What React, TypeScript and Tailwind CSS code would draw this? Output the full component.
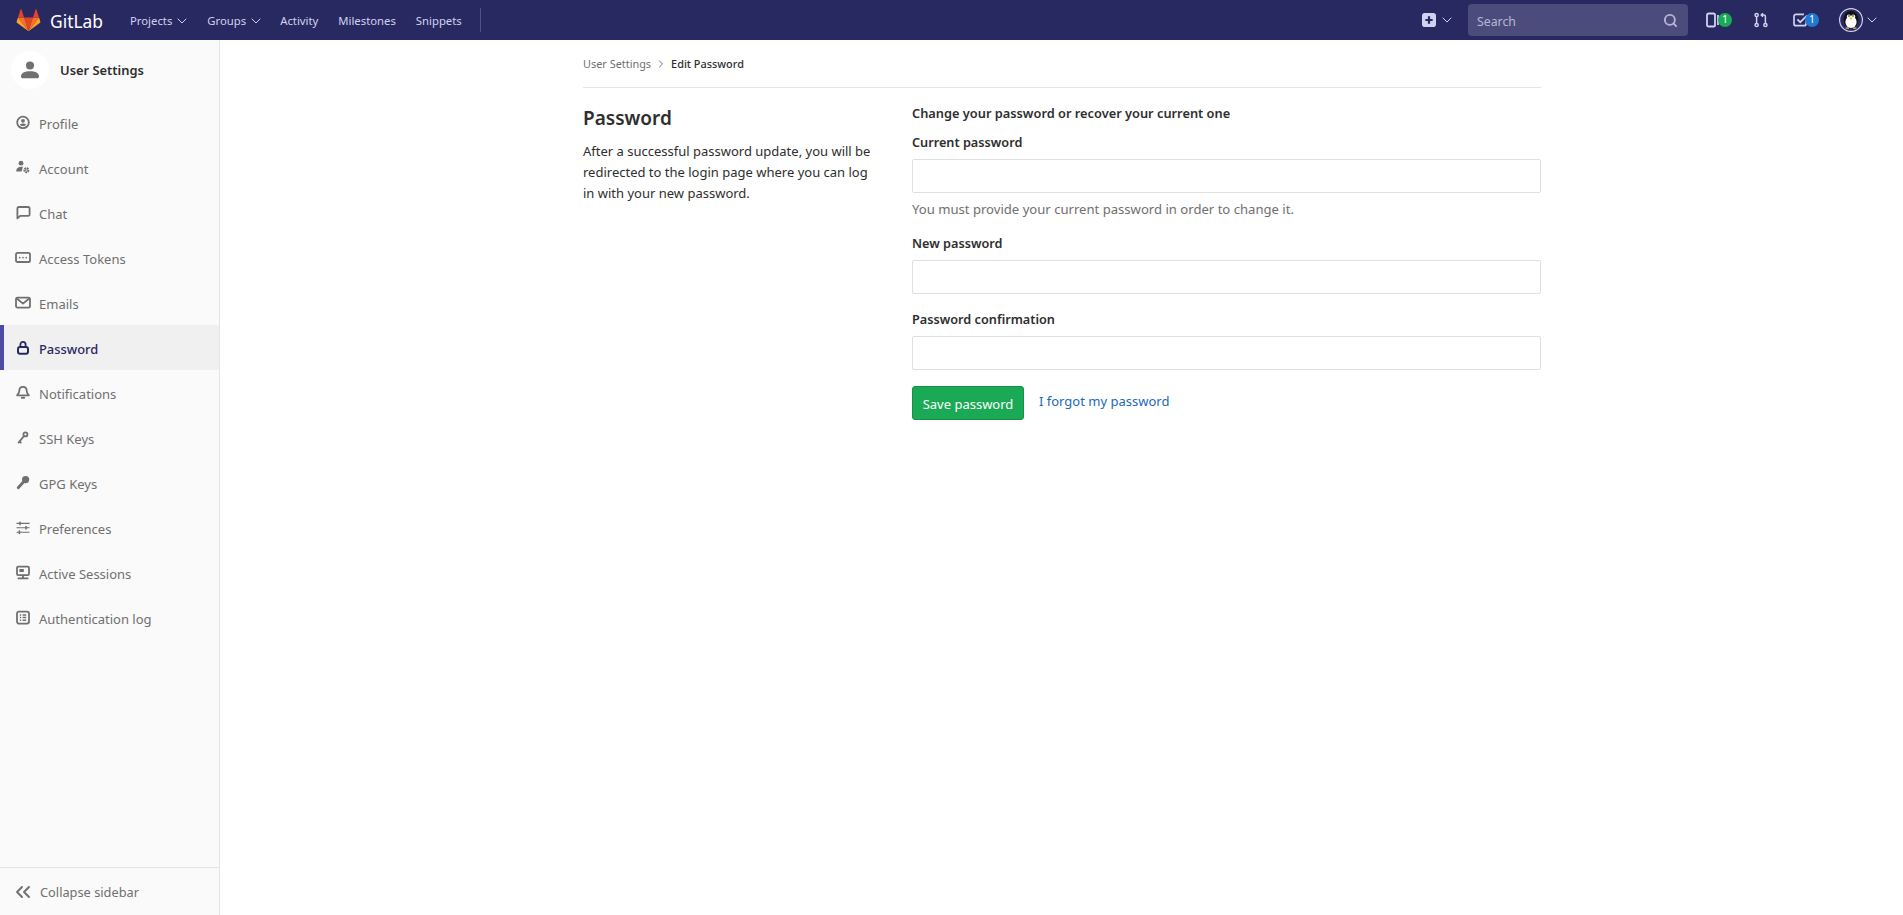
import type { ReactNode } from "react";
import { ChevronDown, ChevronRight, ChevronsLeft, Search } from "lucide-react";

function Ico({ children, size = 16, className = "" }: { children: ReactNode; size?: number; className?: string }) {
  return (
    <svg width={size} height={size} viewBox="0 0 16 16" fill="none" stroke="currentColor" strokeWidth="1.8" strokeLinecap="round" strokeLinejoin="round" className={className}>
      {children}
    </svg>
  );
}

const icons: Record<string, ReactNode> = {
  Profile: (
    <Ico>
      <circle cx="8" cy="7.4" r="5.8" />
      <circle cx="8" cy="5.8" r="1.9" fill="currentColor" stroke="none" />
      <path d="M4.8 9.4c1.8-1.1 4.6-1.1 6.4 0c-.8 1.2-1.9 1.7-3.2 1.7s-2.4-.5-3.2-1.7z" fill="currentColor" stroke="none" />
    </Ico>
  ),
  Account: (
    <Ico>
      <circle cx="6" cy="3.2" r="2.4" fill="currentColor" stroke="none" />
      <path d="M1.2 11.4c0-3 2-4.6 5-4.6c.7 0 1.2.1 1.7.3l-1.3 4.3z" fill="currentColor" stroke="none" />
      <circle cx="11.4" cy="10.2" r="1.8" strokeWidth="2.4" strokeDasharray="1.5 .5" strokeLinecap="butt" />
    </Ico>
  ),
  Chat: (
    <Ico>
      <path d="M2.4 13.4V3.4a1.4 1.4 0 0 1 1.4-1.4h9.4a1.4 1.4 0 0 1 1.4 1.4v6a1.4 1.4 0 0 1-1.4 1.4H5.2z" />
    </Ico>
  ),
  "Access Tokens": (
    <Ico>
      <rect x="1" y="2.8" width="14" height="9.2" rx="1.6" />
      <path d="M4.8 7.6h.01M8 7.6h.01M11.2 7.6h.01" strokeWidth="1.7" />
    </Ico>
  ),
  Emails: (
    <Ico>
      <rect x="1" y="2.6" width="14" height="10" rx="1.6" />
      <path d="M2.4 4 8 8.6 13.6 4" />
    </Ico>
  ),
  Password: (
    <Ico>
      <rect x="3" y="7" width="10" height="6.8" rx="2" strokeWidth="2" />
      <path d="M5.4 7V4.4a2.6 2.6 0 0 1 5.2 0V7" />
    </Ico>
  ),
  Notifications: (
    <Ico>
      <path d="M8 1.8c2.6 0 3.7 2 3.7 4.2c0 2 1.2 3.1 2.2 4.3H2.1c1-1.2 2.2-2.3 2.2-4.3C4.3 3.8 5.4 1.8 8 1.8z" />
      <path d="M6.8 12.8h2.4" strokeWidth="2" />
    </Ico>
  ),
  "SSH Keys": (
    <Ico>
      <circle cx="10.4" cy="4.4" r="2" />
      <path d="M9 6 3.6 12.6M4.4 11.4l1.4 1.2" />
    </Ico>
  ),
  "GPG Keys": (
    <Ico>
      <circle cx="10.6" cy="4.6" r="3.6" fill="currentColor" stroke="none" />
      <path d="M8.4 7 3.2 12.8" strokeWidth="2.8" />
    </Ico>
  ),
  Preferences: (
    <Ico>
      <path d="M1.5 3.4h13M1.5 7.8h13M1.5 12.2h13" strokeWidth="1.1" strokeLinecap="butt" />
      <path d="M5 2.2v2.4M11 6.6V9M4.4 11v2.4" strokeWidth="1.6" />
    </Ico>
  ),
  "Active Sessions": (
    <Ico>
      <rect x="2" y="1.6" width="12" height="8.6" rx="1.2" />
      <rect x="4.4" y="4" width="4.4" height="3" fill="currentColor" stroke="none" />
      <path d="M8 10.6v2.4M3.4 13.4h9.2" />
    </Ico>
  ),
  "Authentication log": (
    <Ico>
      <rect x="2" y="1.6" width="12" height="12" rx="2" />
      <path d="M4.8 5h1.4M7.6 5h3.6M4.8 7.6h1.4M7.6 7.6h3.6M4.8 10.2h1.4M7.6 10.2h3.6" strokeWidth="1.5" strokeLinecap="butt" />
    </Ico>
  ),
};

const navItems = ["Profile", "Account", "Chat", "Access Tokens", "Emails", "Password", "Notifications", "SSH Keys", "GPG Keys", "Preferences", "Active Sessions", "Authentication log"];

function Logo() {
  return (
    <svg width="25" height="24" viewBox="0 0 36 36">
      <path d="M18 34.8 24.6 14.4H11.4z" fill="#e24329" />
      <path d="M18 34.8 11.4 14.4H2.2z" fill="#fc6d26" />
      <path d="M2.2 14.4.2 20.6c-.2.6 0 1.2.5 1.5L18 34.8z" fill="#fca326" />
      <path d="M2.2 14.4h9.2L7.4 2.2c-.2-.6-1.1-.6-1.3 0z" fill="#e24329" />
      <path d="M18 34.8 24.6 14.4h9.2z" fill="#fc6d26" />
      <path d="m33.8 14.4 2 6.2c.2.6 0 1.2-.5 1.5L18 34.8z" fill="#fca326" />
      <path d="M33.8 14.4h-9.2l4-12.2c.2-.6 1.1-.6 1.3 0z" fill="#e24329" />
    </svg>
  );
}

function Penguin() {
  return (
    <svg className="ml-[20px]" width="24" height="24" viewBox="0 0 24 24">
      <circle cx="12" cy="12" r="11.4" fill="#292961" stroke="#d1d1f0" strokeWidth="1.2" />
      <ellipse cx="12" cy="11.5" rx="7.4" ry="8.4" fill="#111" />
      <ellipse cx="12" cy="14" rx="5.6" ry="6" fill="#fff" />
      <circle cx="9.8" cy="8.6" r="2" fill="#fff" />
      <circle cx="14.2" cy="8.6" r="2" fill="#fff" />
      <circle cx="10" cy="8" r=".8" fill="#111" />
      <circle cx="14" cy="8" r=".8" fill="#111" />
      <path d="M10.4 9.6h3.2L12 12z" fill="#f5a623" />
      <path d="M6.6 20.2h3.4M14 20.2h3.4" stroke="#f5c023" strokeWidth="1.3" />
    </svg>
  );
}

function TopBar() {
  return (
    <header className="flex h-10 shrink-0 items-center bg-[#292961] text-[#d1d1f0]">
      <div className="ml-4 flex items-center">
        <Logo />
        <span className="ml-[9px] mt-[2px] text-[17.4px] text-white">GitLab</span>
      </div>
      <nav className="ml-[27px] mt-[2px] flex items-center text-[11.3px]">
        <a className="flex items-center gap-[2px]">Projects <ChevronDown size={16} strokeWidth={1.5} /></a>
        <a className="ml-[17px] flex items-center gap-[2px]">Groups <ChevronDown size={16} strokeWidth={1.5} /></a>
        <a className="ml-[16px]">Activity</a>
        <a className="ml-5">Milestones</a>
        <a className="ml-5">Snippets</a>
      </nav>
      <div className="ml-[18px] h-6 w-px bg-[#4f4f8a]" />
      <div className="ml-auto mr-[23px] flex items-center">
        <svg width="14" height="14" viewBox="0 0 15 15">
          <rect width="15" height="15" rx="3" fill="#d1d1f0" />
          <path d="M7.5 3.6v7.8M3.6 7.5h7.8" stroke="#292961" strokeWidth="2.4" />
        </svg>
        <ChevronDown size={16} strokeWidth={1.5} className="ml-[3px]" />
        <div className="ml-[13px] flex h-8 w-[220px] items-center justify-between rounded bg-[#4c4c7c] pl-[9px] pr-[10px] text-[12.3px] text-[#b6b6d8]">
          <span className="mt-[5px]">Search</span>
          <Search size={15} strokeWidth={3} />
        </div>
        <div className="relative ml-[18px] flex h-4 w-[26px] items-center">
          <svg width="14" height="16" viewBox="0 0 14 16" fill="none" stroke="currentColor" strokeWidth="1.8">
            <rect x="1" y="1.5" width="8" height="13" rx="1.6" />
            <path d="M12 3v10" />
          </svg>
          <span className="absolute left-[12px] top-[1px] flex h-[14px] w-[14px] items-center justify-center rounded-full bg-[#1aaa55] text-[10.5px] text-white">1</span>
        </div>
        <svg className="ml-[22px]" width="14" height="16" viewBox="0 0 14 16" fill="none" stroke="currentColor" strokeWidth="1.5">
          <circle cx="2.6" cy="3" r="1.6" />
          <circle cx="2.6" cy="13" r="1.6" />
          <circle cx="11.4" cy="13" r="1.6" />
          <path d="M2.6 4.6v6.8M11.4 11.4V4.5a1.5 1.5 0 0 0-1.5-1.5H7.6M9 1.2 7.2 3 9 4.8" />
        </svg>
        <div className="relative ml-[25px] flex h-4 w-[26px] items-center">
          <svg width="18" height="16" viewBox="0 0 18 16" fill="none" stroke="currentColor" strokeWidth="1.7">
            <path d="M13 8.5v3.2a2 2 0 0 1-2 2H3a2 2 0 0 1-2-2V4.3a2 2 0 0 1 2-2h8" />
            <path d="m4.4 7.4 2.8 2.8L14 3.6" />
          </svg>
          <span className="absolute left-[12px] top-[1px] flex h-[14px] w-[14px] items-center justify-center rounded-full bg-[#1f78d1] text-[10.5px] text-white">1</span>
        </div>
        <Penguin />
        <ChevronDown size={16} strokeWidth={1.5} className="ml-px" />
      </div>
    </header>
  );
}

function Sidebar() {
  return (
    <aside className="flex w-[220px] shrink-0 flex-col border-r border-[#e5e5e5] bg-[#fafafa]">
      <div className="flex items-center pl-[11px] pt-[11px]">
        <div className="flex h-[38px] w-[38px] items-center justify-center rounded-full bg-white text-[#707070]">
          <svg width="20" height="20" viewBox="0 0 20 20" fill="currentColor">
            <circle cx="10" cy="5.6" r="4" />
            <path d="M1 16.4C1 13 4.6 11.2 10 11.2s9 1.8 9 5.2c0 1-.8 1.8-2 1.8H3c-1.2 0-2-.8-2-1.8z" />
          </svg>
        </div>
        <span className="ml-[11px] mt-[2px] text-[12.9px] font-semibold text-[#2e2e2e]">User Settings</span>
      </div>
      <nav className="mt-[11px] flex flex-col">
        {navItems.map((name) => {
          const active = name === "Password";
          return (
            <a
              key={name}
              className={
                active
                  ? "flex h-[45px] items-center gap-2 border-l-[4px] border-[#4b4ba3] bg-[#f0f0f0] pl-[11px] text-[12.9px] font-medium text-[#292961]"
                  : "flex h-[45px] items-center gap-2 pl-[15px] text-[13px] text-[#707070]"
              }
            >
              {icons[name]}
              <span className="mt-[4px]">{name}</span>
            </a>
          );
        })}
      </nav>
      <div className="mt-auto flex h-[48px] items-center gap-[5px] border-t border-[#e5e5e5] pl-[11px] text-[12.8px] text-[#707070]">
        <ChevronsLeft size={24} strokeWidth={1.9} />
        <span className="mt-[2px]">Collapse sidebar</span>
      </div>
    </aside>
  );
}

function Field({ label, help }: { label: string; help?: string }) {
  return (
    <div>
      <label className="block text-[12.7px] font-semibold leading-[19px] text-[#2e2e2e]">{label}</label>
      <input type="password" className="mt-[7px] block h-[34px] w-full rounded-[2px] border border-[#dfdfdf] bg-white" />
      {help && <p className="mt-[5px] pt-px text-[13.1px] leading-5 text-[#707070]">{help}</p>}
    </div>
  );
}

export default function App() {
  return (
    <div className="flex h-[915px] flex-col overflow-hidden bg-white font-['Noto_Sans','Open_Sans',sans-serif]">
      <TopBar />
      <div className="flex min-h-0 flex-1">
        <Sidebar />
        <main className="flex-1">
          <div className="ml-[363px] w-[958px]">
            <div className="flex h-[48px] items-center border-b border-[#e5e5e5] pt-px text-[10.9px]">
              <span className="text-[#707070]">User Settings</span>
              <ChevronRight size={12} className="mx-[4px] text-[#707070]" />
              <span className="font-medium text-[#2e2e2e]">Edit Password</span>
            </div>
            <div className="mt-[15px] flex">
              <div className="w-[329px] shrink-0">
                <h4 className="pt-[2px] text-[19px] font-semibold leading-[27px] text-[#2e2e2e]">Password</h4>
                <p className="mt-[9px] w-[295px] text-[13px] leading-[21px] text-[#2e2e2e]">
                  After a successful password update, you will be redirected to the login page where you can log in with your new password.
                </p>
              </div>
              <div className="flex-1">
                <div className="pt-px text-[12.8px] font-semibold leading-[19px] text-[#2e2e2e]">Change your password or recover your current one</div>
                <div className="mt-[10px]">
                  <Field label="Current password" help="You must provide your current password in order to change it." />
                </div>
                <div className="mt-[15px]">
                  <Field label="New password" />
                </div>
                <div className="mt-[16px]">
                  <Field label="Password confirmation" />
                </div>
                <div className="mt-[16px] flex items-start">
                  <button className="h-[34px] w-[112px] rounded-[3px] border border-[#168f48] bg-[#1aaa55] pt-[3px] text-[13px] text-white">Save password</button>
                  <a className="ml-[15px] mt-[6px] text-[13px] text-[#1b69b6]">I forgot my password</a>
                </div>
              </div>
            </div>
          </div>
        </main>
      </div>
    </div>
  );
}
